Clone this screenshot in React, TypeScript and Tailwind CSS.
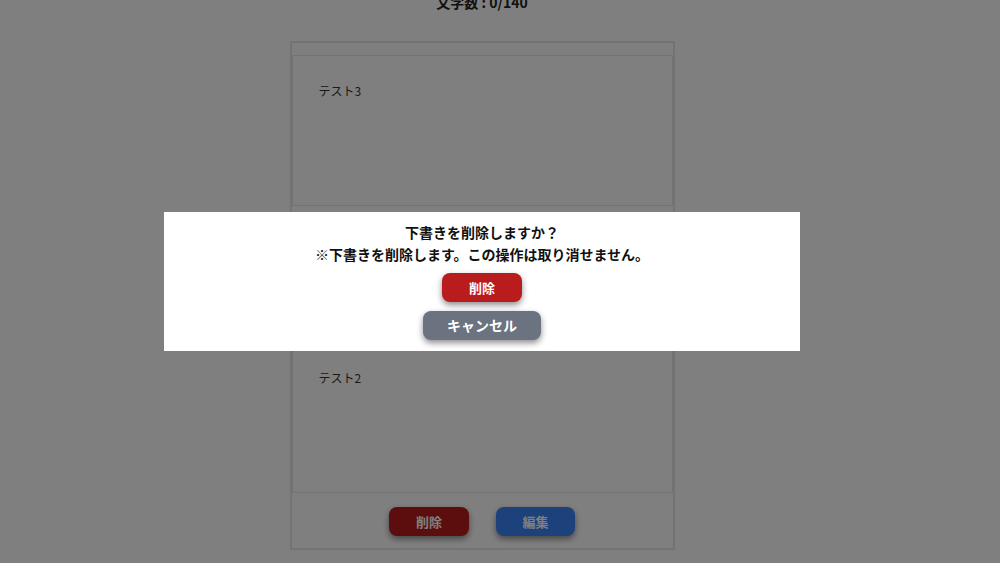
import { useState } from 'react'

const drafts = [
  { id: 3, body: 'テスト3' },
  { id: 2, body: 'テスト2' },
]

const font = 'font-["Noto_Sans_CJK_JP","Noto_Sans",sans-serif]'

const DraftCard = ({ body, onDelete }: { body: string; onDelete: () => void }) => {
  return (
    <div className="w-[385px] border-2 border-gray-200 pt-[12px]">
      <div className="h-[151px] border border-gray-200 px-[26px] pt-[26px] text-[12px] leading-[18px] text-[#333]">
        {body}
      </div>
      <div className="flex justify-center gap-[27px] pt-[14px] pb-[12px]">
        <button
          type="button"
          onClick={onDelete}
          className="h-[29px] w-[80px] rounded-lg bg-[#b91c1c] text-[13px] font-bold text-white shadow-[0_3px_6px_rgba(0,0,0,0.45)]"
        >
          削除
        </button>
        <button
          type="button"
          className="h-[29px] w-[79px] rounded-lg bg-[#3b82f6] text-[13px] font-bold text-white shadow-[0_3px_6px_rgba(0,0,0,0.45)]"
        >
          編集
        </button>
      </div>
    </div>
  )
}

export default function App() {
  const [open, setOpen] = useState(true)

  return (
    <div className={`relative h-[563px] overflow-hidden bg-white ${font}`}>
      <div className="flex w-[964px] flex-col items-center gap-[65px]">
        <div className="-mb-[36px] -mt-[8px] text-[14px] font-bold leading-[20px] text-[#222]">
          文字数 : 0/140
        </div>
        {drafts.map((d) => (
          <DraftCard key={d.id} body={d.body} onDelete={() => setOpen(true)} />
        ))}
      </div>

      {open && (
        <div className="fixed inset-0 z-50 flex items-center bg-black/50">
          <div className="flex w-[964px] justify-center">
            <div className="flex w-[636px] flex-col items-center bg-white pt-[9px] pb-[11px]">
              <p className="text-[14px] font-bold leading-[22px] text-[#111]">下書きを削除しますか？</p>
              <p className="text-[14px] font-bold leading-[22px] text-[#111]">
                ※下書きを削除します。この操作は取り消せません。
              </p>
              <button
                type="button"
                onClick={() => setOpen(false)}
                className="mt-[8px] h-[29px] w-[80px] rounded-lg bg-[#b91c1c] text-[13px] font-bold text-white shadow-[0_3px_6px_rgba(0,0,0,0.45)]"
              >
                削除
              </button>
              <button
                type="button"
                onClick={() => setOpen(false)}
                className="mt-[9px] h-[29px] w-[118px] rounded-lg bg-[#6b7280] text-[14px] font-bold text-white shadow-[0_3px_6px_rgba(0,0,0,0.45)]"
              >
                キャンセル
              </button>
            </div>
          </div>
        </div>
      )}
    </div>
  )
}
